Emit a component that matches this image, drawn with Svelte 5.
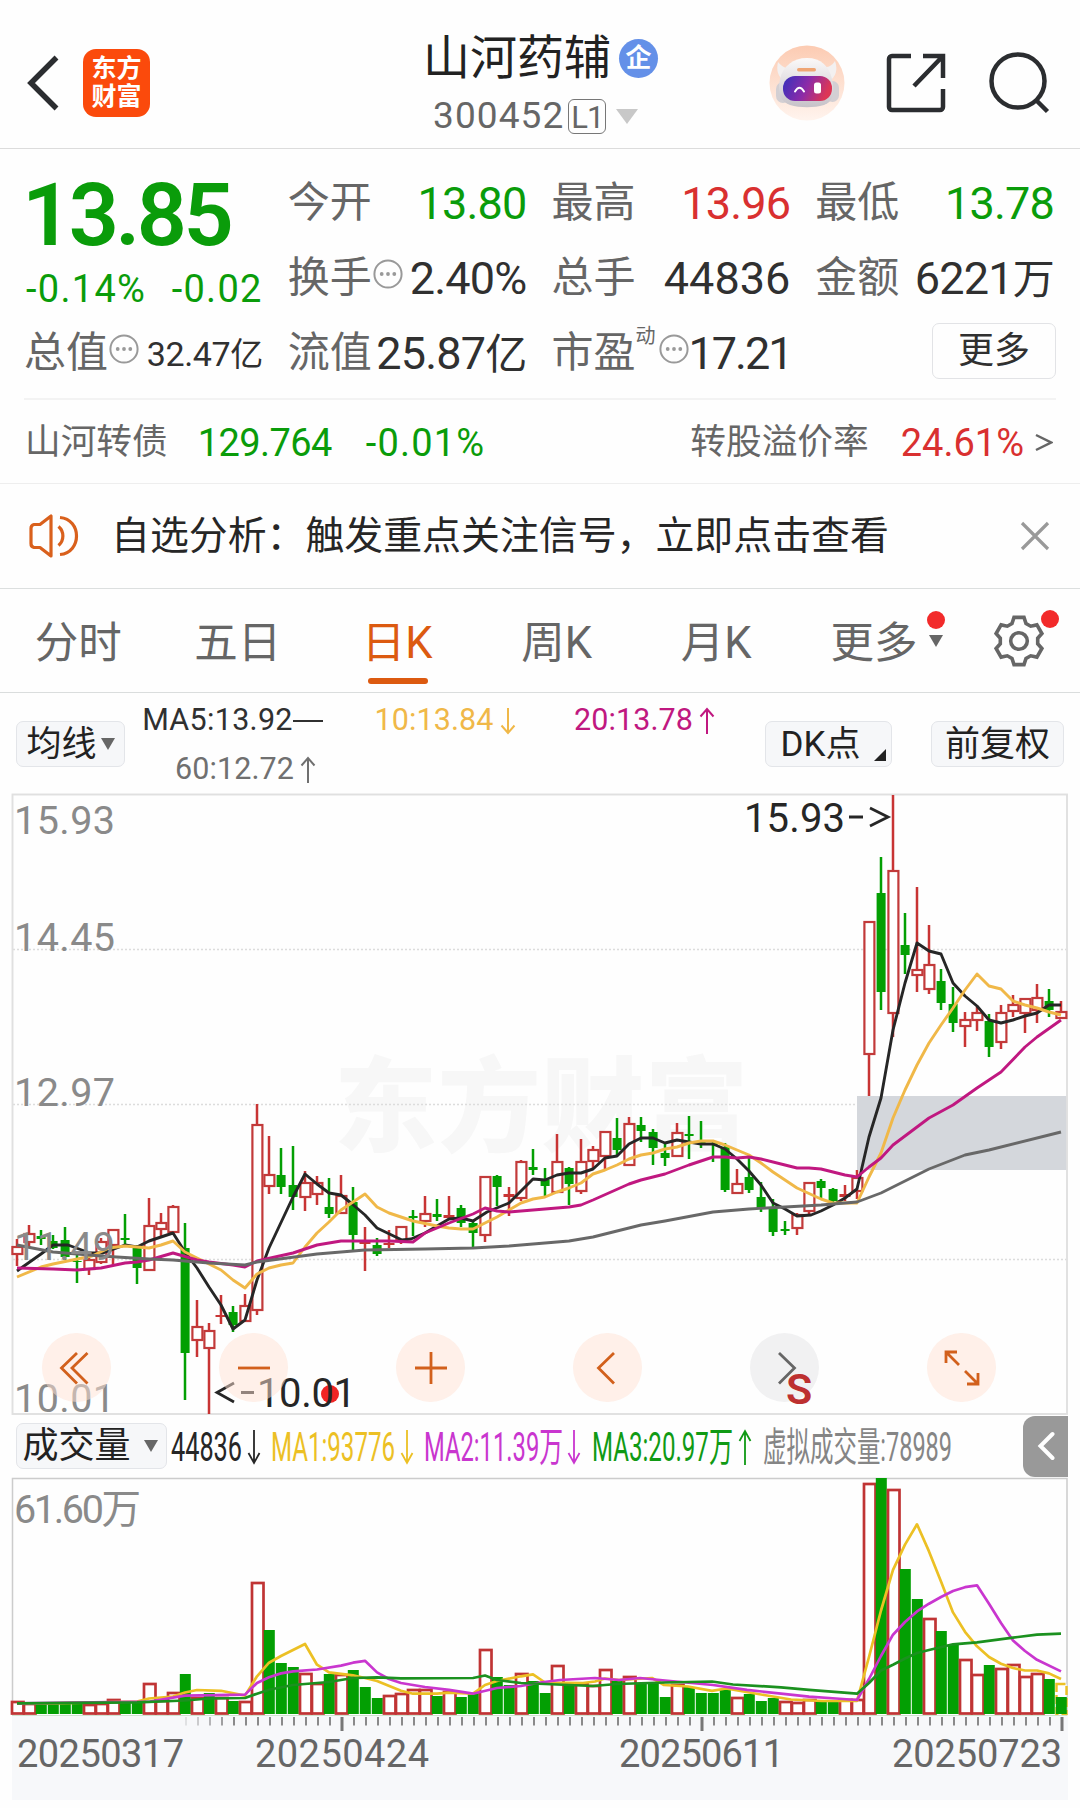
<script lang="ts">
  type Candle = [string, number, number, number, number];

  const tabs = ["分时", "五日", "日K", "周K", "月K"];
  let activeTab = "日K";
  let noticeOpen = true;

  // type (r = up, g = down), high, body top, body bottom, low
  const candles: Candle[] = [
    ["r", 1239, 1247, 1254, 1266], ["r", 1225, 1234, 1242, 1246], ["g", 1230, 1236, 1239, 1245], ["g", 1235, 1241, 1248, 1249],
    ["g", 1227, 1240, 1257, 1260], ["g", 1252, 1261, 1262, 1283], ["r", 1258, 1260, 1269, 1275], ["r", 1238, 1242, 1262, 1264],
    ["r", 1229, 1230, 1245, 1265], ["g", 1214, 1238, 1240, 1244], ["g", 1245, 1247, 1268, 1284], ["r", 1198, 1226, 1270, 1270],
    ["r", 1213, 1223, 1229, 1237], ["r", 1205, 1207, 1232, 1232], ["g", 1223, 1248, 1353, 1400], ["r", 1300, 1327, 1340, 1357],
    ["r", 1323, 1331, 1348, 1414], ["r", 1295, 1315, 1317, 1324], ["g", 1306, 1312, 1325, 1332], ["r", 1294, 1306, 1321, 1322],
    ["r", 1104, 1125, 1310, 1315], ["r", 1136, 1175, 1186, 1194], ["g", 1148, 1175, 1187, 1194], ["g", 1146, 1185, 1197, 1210],
    ["r", 1171, 1183, 1197, 1211], ["r", 1176, 1183, 1194, 1205], ["g", 1178, 1207, 1214, 1218], ["r", 1175, 1196, 1213, 1214],
    ["g", 1187, 1202, 1235, 1250], ["r", 1227, 1242, 1244, 1271], ["g", 1238, 1245, 1254, 1256], ["r", 1230, 1243, 1245, 1248],
    ["r", 1226, 1227, 1240, 1244], ["g", 1210, 1216, 1218, 1236], ["r", 1196, 1214, 1221, 1227], ["g", 1199, 1214, 1217, 1221],
    ["r", 1196, 1215, 1218, 1219], ["g", 1205, 1208, 1223, 1227], ["g", 1220, 1223, 1233, 1247], ["r", 1176, 1177, 1235, 1242],
    ["g", 1175, 1176, 1187, 1206], ["r", 1187, 1194, 1197, 1216], ["r", 1160, 1162, 1198, 1201], ["g", 1149, 1167, 1170, 1175],
    ["g", 1168, 1180, 1186, 1196], ["r", 1134, 1162, 1192, 1193], ["g", 1167, 1168, 1184, 1205], ["r", 1139, 1162, 1191, 1194],
    ["r", 1146, 1150, 1161, 1169], ["r", 1131, 1132, 1156, 1171], ["g", 1118, 1138, 1150, 1155], ["r", 1117, 1124, 1165, 1166],
    ["g", 1117, 1125, 1131, 1142], ["g", 1129, 1132, 1148, 1165], ["g", 1142, 1153, 1158, 1166], ["r", 1123, 1133, 1156, 1156],
    ["g", 1116, 1134, 1136, 1159], ["g", 1121, 1142, 1144, 1148], ["g", 1140, 1143, 1145, 1162], ["g", 1143, 1147, 1190, 1192],
    ["r", 1169, 1184, 1193, 1193], ["g", 1155, 1177, 1190, 1193], ["g", 1182, 1197, 1208, 1212], ["g", 1199, 1208, 1232, 1236],
    ["g", 1221, 1229, 1231, 1235], ["r", 1213, 1215, 1228, 1235], ["r", 1182, 1183, 1211, 1215], ["g", 1179, 1181, 1188, 1199],
    ["g", 1188, 1189, 1201, 1203], ["r", 1185, 1194, 1197, 1201], ["r", 1170, 1178, 1191, 1199], ["r", 921, 922, 1054, 1096],
    ["g", 857, 893, 992, 1010], ["r", 795, 871, 1013, 1037], ["g", 913, 945, 955, 974], ["r", 887, 970, 975, 992],
    ["r", 925, 965, 989, 994], ["g", 969, 981, 1003, 1010], ["g", 987, 1004, 1023, 1032], ["r", 1012, 1020, 1026, 1047],
    ["r", 1006, 1013, 1020, 1031], ["g", 1014, 1021, 1047, 1057], ["r", 1005, 1013, 1042, 1049], ["r", 995, 1005, 1011, 1017],
    ["r", 998, 999, 1013, 1033], ["r", 984, 998, 1010, 1023], ["g", 989, 1001, 1010, 1017], ["r", 1001, 1012, 1018, 1019],
  ];

  const priceLines = [
    { color: "#262626", points: "17,1271 41,1254 53,1245 68,1245 90,1253 103,1253 125,1245 137,1247 149,1241 173,1233 185,1252 197,1268 209,1287 221,1305 233,1329 245,1320 257,1280 269,1248 293,1197 305,1174 317,1184 329,1193 341,1195 351,1203 365,1215 377,1228 402,1240 411,1239 425,1233 449,1219 461,1218 473,1221 487,1212 509,1203 533,1179 545,1180 557,1175 569,1173 581,1173 593,1169 605,1158 617,1156 629,1144 641,1138 653,1138 665,1143 677,1140 689,1142 701,1144 713,1144 725,1149 737,1159 749,1171 761,1185 773,1203 785,1209 797,1216 811,1215 821,1211 833,1205 845,1198 857,1189 869,1137 881,1098 893,1030 905,983 917,943 929,951 941,954 953,983 965,996 977,1006 989,1020 1001,1023 1013,1020 1025,1016 1037,1013 1049,1005 1061,1005" },
    { color: "#f0b848", points: "17,1277 41,1267 53,1264 92,1256 109,1248 125,1246 149,1248 161,1245 173,1241 185,1252 197,1258 221,1270 233,1280 245,1288 257,1274 269,1268 281,1265 293,1263 305,1247 317,1233 329,1222 341,1210 353,1202 365,1194 377,1207 389,1213 401,1217 413,1221 437,1226 449,1228 461,1229 473,1229 485,1223 497,1217 509,1210 521,1203 533,1199 545,1197 557,1192 569,1188 581,1183 593,1174 605,1170 617,1165 629,1159 641,1155 653,1153 665,1149 677,1147 689,1143 701,1141 713,1141 725,1145 737,1150 749,1155 761,1163 773,1172 797,1188 821,1199 833,1203 857,1203 869,1177 881,1153 893,1118 905,1090 917,1065 929,1043 941,1025 953,1008 965,990 977,974 989,986 1001,989 1013,1001 1025,1005 1037,1008 1049,1012 1061,1015" },
    { color: "#c01880", points: "17,1268 53,1269 77,1270 101,1268 125,1263 137,1262 149,1260 173,1253 197,1260 209,1262 233,1265 245,1267 257,1261 293,1253 317,1245 341,1241 389,1241 413,1242 425,1233 449,1223 473,1214 485,1208 497,1211 509,1212 533,1210 545,1209 569,1207 581,1205 593,1200 629,1184 641,1180 665,1174 689,1165 713,1157 725,1157 737,1158 749,1157 761,1159 785,1165 797,1168 809,1168 821,1169 845,1175 857,1177 869,1167 881,1158 893,1145 905,1136 929,1118 953,1105 977,1088 989,1080 1001,1072 1025,1047 1037,1037 1061,1020" },
    { color: "#686868", points: "17,1245 53,1252 101,1256 149,1259 173,1260 209,1263 245,1265 257,1262 317,1254 365,1250 425,1249 473,1248 509,1246 533,1244 569,1241 593,1237 641,1225 665,1221 713,1212 749,1209 785,1207 821,1205 857,1202 881,1193 929,1169 965,1155 989,1150 1061,1132" },
  ];

  const volumes = [
    13, 11, 12, 12, 11, 12, 10, 11, 15, 12, 12, 31, 14, 22, 40, 17, 21, 17, 13, 13, 132, 84, 51, 47,
    41, 31, 40, 40, 44, 27, 16, 19, 21, 25, 25, 18, 23, 17, 21, 65, 37, 29, 41, 33, 21, 49, 31, 31,
    29, 45, 33, 38, 31, 32, 17, 30, 27, 21, 21, 25, 17, 20, 13, 16, 13, 12, 15, 12, 12, 15, 15, 231,
    236, 225, 145, 115, 96, 83, 70, 55, 40, 49, 46, 50, 38, 41, 35, 17,
  ];
  const downBars = [2, 3, 4, 5, 9, 10, 14, 16, 18, 21, 22, 23, 26, 28, 29, 30, 35, 37, 38, 40, 41, 43, 44, 46, 50, 52, 53, 54, 56, 57, 58, 59, 61, 62, 63, 67, 68, 72, 74, 75, 77, 78, 81, 86, 87];

  // x, height above the baseline
  const volumeLines = [
    { color: "#ecc024", points: [[17, 11.6], [53, 11.6], [137, 13.5], [149, 16.5], [173, 18.5], [185, 22.5], [197, 25], [221, 24.2], [245, 19.4], [257, 38.7], [269, 52.3], [281, 59], [305, 71], [317, 50.3], [329, 42.6], [353, 39.7], [365, 37], [377, 34], [401, 24.2], [413, 21.3], [437, 21.3], [449, 22.3], [473, 21.3], [485, 30], [497, 34], [521, 38.7], [533, 40.6], [545, 32.5], [583, 32], [595, 33.5], [605, 36.5], [619, 35], [652, 37], [664, 30], [688, 28.5], [712, 24.2], [726, 26.5], [764, 20], [791, 15.5], [822, 14], [857, 14], [869, 58], [881, 104.5], [893, 145.2], [905, 170.4], [917, 190.7], [929, 163.6], [941, 133.6], [953, 102.6], [965, 83.2], [977, 68.7], [989, 58], [1001, 51.3], [1013, 47], [1025, 44.5], [1037, 44.5], [1049, 41.6], [1061, 36]] },
    { color: "#c936cf", points: [[17, 11.6], [150, 13.5], [185, 19.4], [245, 20.4], [257, 32], [269, 37.7], [281, 41.6], [293, 43.6], [317, 45.5], [341, 49.4], [353, 52.3], [365, 54.2], [377, 42.6], [389, 36], [401, 32], [425, 28], [449, 25.2], [473, 21.3], [497, 27], [521, 29], [540, 32.5], [560, 35], [595, 37], [619, 35], [640, 37], [665, 34.5], [713, 30], [747, 25.2], [781, 21.3], [809, 18.4], [836, 16.5], [857, 15], [869, 36], [881, 59], [893, 80.3], [905, 93], [917, 103.6], [929, 111.3], [941, 118], [953, 124], [965, 127.8], [977, 129.7], [989, 111.3], [1001, 92], [1013, 74.5], [1025, 64], [1037, 55.2], [1061, 43.6]] },
    { color: "#1b911f", points: [[17, 11.6], [137, 12.6], [185, 14.5], [209, 16.5], [245, 17], [257, 21.3], [269, 25.2], [293, 30], [329, 33], [353, 37], [377, 37.7], [401, 36.7], [473, 37], [485, 39.5], [497, 35], [521, 32], [545, 31], [593, 29], [617, 31], [665, 32.5], [712, 33.5], [733, 30.5], [781, 27.7], [809, 25.2], [857, 21.3], [869, 32], [881, 44.5], [893, 50.3], [905, 56.5], [917, 62], [929, 65], [953, 70.7], [977, 72.6], [1013, 77.4], [1037, 80.3], [1061, 81.3]] },
  ];

  const base = 1715;
  const candleX = (i: number) => 17 + i * 12;
  const toPoints = (list: number[][]) => list.map(([x, h]) => `${x},${base - h}`).join(" ");

  const ticks = Array.from({ length: 74 }, (_, i) => i + 14);
  const dates = [
    { text: "20250317", x: 17, width: 167 },
    { text: "20250424", x: 255, width: 174 },
    { text: "20250611", x: 619, width: 165 },
    { text: "20250723", x: 892, width: 170 },
  ];

  const prices = [
    { text: "15.93", y: 834 },
    { text: "14.45", y: 951 },
    { text: "12.97", y: 1106 },
    { text: "11.49", y: 1260 },
    { text: "10.01", y: 1412 },
  ];

  const volumeLegend = [
    { text: "44836", x: 171, width: 71, color: "#262626", arrow: 254, up: false },
    { text: "MA1:93776", x: 271, width: 124, color: "#ecc024", arrow: 407, up: false },
    { text: "MA2:11.39万", x: 424, width: 139, color: "#c936cf", arrow: 574, up: false },
    { text: "MA3:20.97万", x: 592, width: 141, color: "#109a14", arrow: 745, up: true },
    { text: "虚拟成交量:78989", x: 763, width: 189, color: "#858585", arrow: 0, up: false },
  ];

  const gear = Array.from({ length: 6 }, (_, k) => (k * Math.PI) / 3)
    .flatMap((a) =>
      [[-7, -17.5], [-5, -23.6], [5, -23.6], [7, -17.5]].map(
        ([x, y]) => `${(x * Math.cos(a) - y * Math.sin(a)).toFixed(1)},${(x * Math.sin(a) + y * Math.cos(a)).toFixed(1)}`
      )
    )
    .join(" ");
</script>

{#snippet info()}
  <svg class="info" width="30" height="30" viewBox="0 0 30 30">
    <circle cx="15" cy="15" r="13.6" fill="none" stroke="#999" stroke-width="2" />
    <circle cx="8.7" cy="15" r="1.9" fill="#999" />
    <circle cx="15" cy="15" r="1.9" fill="#999" />
    <circle cx="21.3" cy="15" r="1.9" fill="#999" />
  </svg>
{/snippet}

{#snippet arrow(up: boolean)}
  <svg class="arrow" width="16" height="28" viewBox="0 0 16 28">
    <path d={up ? "M8 27V2M1.5 9.5L8 2l6.5 7.5" : "M8 1v25M1.5 18.5L8 26l6.5-7.5"} />
  </svg>
{/snippet}

<main>
  <header>
    <svg class="back" width="34" height="58" viewBox="0 0 34 58">
      <path d="M31.5 3.5L6 29l25.5 25.5" />
    </svg>
    <div class="logo"><span>东方</span><span>财富</span></div>
    <div class="stock">
      <div class="name">山河药辅<span class="company">企</span></div>
      <div class="code"><span>300452</span><span class="level">L1</span><i class="caret"></i></div>
    </div>
    <svg class="robot" width="76" height="76" viewBox="0 0 76 76">
      <defs>
        <linearGradient id="halo" x1="0" y1="0" x2="0" y2="1">
          <stop offset="0" stop-color="#fccbb2" />
          <stop offset="1" stop-color="#fff4ee" />
        </linearGradient>
        <linearGradient id="visor" x1="0" y1="0" x2="1" y2=".25">
          <stop offset="0" stop-color="#3431bd" />
          <stop offset=".55" stop-color="#8c2ba8" />
          <stop offset="1" stop-color="#dc3656" />
        </linearGradient>
        <linearGradient id="shell" x1="0" y1="0" x2="0" y2="1">
          <stop offset="0" stop-color="#fbf9f9" />
          <stop offset="1" stop-color="#c6c2c8" />
        </linearGradient>
      </defs>
      <circle cx="38" cy="38" r="37.5" fill="url(#halo)" />
      <path d="M9 17c-2 9 0 14 6 19l10-12c-7 0-12-2-16-7zM66 16c3 9 1 15-5 20l-10-13c7 0 12-2 15-7z" fill="#f3f0f0" />
      <rect x="7" y="37" width="14" height="21" rx="7" fill="#d3cfd3" />
      <rect x="57" y="36" width="13" height="21" rx="6.5" fill="#d3cfd3" />
      <path d="M38 13c14 0 22 8 25 21 3 14 1 23-8 26-10 3-24 3-34 0-9-3-13-12-10-26 3-13 13-21 27-21z" fill="url(#shell)" />
      <rect x="14" y="31" width="49" height="25" rx="12" fill="url(#visor)" />
      <path d="M26 46.5q4.500-7.500 9 0" fill="none" stroke="#fff" stroke-width="2" stroke-linecap="round" />
      <rect x="45" y="37.5" width="7" height="11" rx="2.5" fill="#fff" />
      <rect x="28" y="23" width="19" height="3.500" rx="1.700" fill="#efa574" />
    </svg>
    <svg class="share" width="60" height="60" viewBox="0 0 60 60">
      <path d="M25 3H6a3 3 0 0 0-3 3v48a3 3 0 0 0 3 3h48a3 3 0 0 0 3-3V36M37 3h20v22M56 4L28 33" />
    </svg>
    <svg class="search" width="62" height="62" viewBox="0 0 62 62">
      <circle cx="29" cy="29" r="26.5" />
      <path d="M47.5 48.5L58.5 59.5" />
    </svg>
  </header>

  <section class="quote">
    <div class="stats">
      <div class="price green">13.85</div>
      <div class="stat"><span>今开</span><b class="green">13.80</b></div>
      <div class="stat"><span>最高</span><b class="red">13.96</b></div>
      <div class="stat"><span>最低</span><b class="green">13.78</b></div>

      <div class="change green"><span>-0.14%</span><span>-0.02</span></div>
      <div class="stat"><span>换手{@render info()}</span><b>2.40%</b></div>
      <div class="stat"><span>总手</span><b class="hands">44836</b></div>
      <div class="stat"><span>金额</span><b>6221<i>万</i></b></div>

      <div class="stat small"><span>总值{@render info()}</span><b>32.47<i>亿</i></b></div>
      <div class="stat"><span>流值</span><b>25.87<i>亿</i></b></div>
      <div class="stat"><span>市盈<sup>动</sup>{@render info()}</span><b class="pe">17.21</b></div>
      <button class="more">更多</button>
    </div>
    <div class="bond">
      <span>山河转债</span>
      <b class="green bond-price">129.764</b>
      <b class="green bond-change">-0.01%</b>
      <span class="premium">转股溢价率</span>
      <b class="red">24.61%</b>
      <svg width="18" height="24" viewBox="0 0 18 24"><path d="M1 4l15 7.500L1 19" fill="none" stroke="#666" stroke-width="2.500" /></svg>
    </div>
  </section>

  {#if noticeOpen}
    <section class="notice">
      <svg width="52" height="46" viewBox="0 0 52 46" class="speaker">
        <path d="M3 15.500a4 4 0 0 1 3-4h6L23 3v40l-11-8.500H6a4 4 0 0 1-3-4zM30.500 13.500a12.500 12.500 0 0 1 0 19M32 4.500c22 2 22 35 0 37" />
      </svg>
      <p>自选分析：触发重点关注信号，立即点击查看</p>
      <button class="close" aria-label="关闭" on:click={() => (noticeOpen = false)}>
        <svg width="30" height="30" viewBox="0 0 30 30"><path d="M2 2l26 26M28 2L2 28" stroke="#999" stroke-width="3.2" /></svg>
      </button>
    </section>
  {/if}

  <nav>
    {#each tabs as tab}
      <button class="tab" class:active={tab === activeTab} on:click={() => (activeTab = tab)}>{tab}</button>
    {/each}
    <button class="tab tab-more">更多<span class="marks"><i class="dot"></i><i class="down"></i></span></button>
    <button class="settings" aria-label="设置">
      <svg width="54" height="54" viewBox="-27 -27 54 54" fill="none" stroke="#666" stroke-width="3.600">
        <polygon points={gear} />
        <circle r="8.300" />
      </svg>
      <i class="dot"></i>
    </button>
  </nav>

  <section class="toolbar">
    <button class="chip average">均线<i class="down"></i></button>
    <div class="averages">
      <span>MA5:13.92<i class="flat"></i></span>
      <span class="ma10">10:13.84{@render arrow(false)}</span>
      <span class="ma20">20:13.78{@render arrow(true)}</span>
      <span class="ma60">60:12.72{@render arrow(true)}</span>
    </div>
    <button class="chip dk">DK点<i class="corner"></i></button>
    <button class="chip adjust">前复权</button>
  </section>

  <section class="kline">
    <svg width="1080" height="624" viewBox="0 793 1080 624">
      <text class="watermark" x="334" y="1144" textLength="414">东方财富</text>
      {#each [949.5, 1104.5, 1259.5] as y}
        <line x1="13" x2="1067" y1={y} y2={y} stroke="#dcdcdc" stroke-width="1.500" stroke-dasharray="2 2" />
      {/each}
      <rect x="857" y="1096" width="210" height="74" fill="#d4d7dc" />
      <rect x="12.5" y="794.5" width="1054.5" height="619.5" fill="none" stroke="#e0e0e0" stroke-width="1.900" />

      {#each candles as [type, high, top, bottom, low], i}
        {#if type === "r"}
          <path d={`M${candleX(i)} ${high}V${top}M${candleX(i)} ${bottom}V${low}`} stroke="#c83434" stroke-width="2.5" />
          {#if bottom - top < 4}
            <rect x={candleX(i) - 5.5} y={top} width="11" height={bottom - top} fill="#c83434" />
          {:else}
            <rect x={candleX(i) - 4.6} y={top} width="10" height={bottom - top} fill="#fff" stroke="#c23a3a" stroke-width="2.200" />
          {/if}
        {:else}
          <line x1={candleX(i)} x2={candleX(i)} y1={high} y2={low} stroke="#039f03" stroke-width="2.5" />
          <rect x={candleX(i) - 4.4} y={top} width="9" height={bottom - top} fill="#039f03" />
        {/if}
      {/each}

      {#each priceLines as line}
        <polyline points={line.points} fill="none" stroke={line.color} stroke-width="2.900" stroke-linejoin="round" />
      {/each}

      {#each prices as price}
        <text class="axis" x="14" y={price.y} textLength="101">{price.text}</text>
      {/each}
      <text class="peak" x="744" y="832" textLength="101">15.93</text>
      <path class="pointer" d="M849 817h14M870 808l18 9-18 9" />
      <circle cx="330" cy="1394" r="9" fill="#f02424" />
      <path class="pointer" d="M234 1383l-17 9.500 17 9.500M241 1392.500h13" />
      <text class="peak" x="257" y="1407" textLength="99">10.01</text>
    </svg>
    <div class="controls">
      <button aria-label="最早"><svg viewBox="-16 -16 32 32"><path d="M0-15L-15.500 0 0 15.500M10.500-15L-5 0l15.500 15.500" /></svg></button>
      <button aria-label="缩小"><svg viewBox="-16 -16 32 32"><path d="M-16 0h32" /></svg></button>
      <button aria-label="放大"><svg viewBox="-16 -16 32 32"><path d="M-16 0h32M0-16v32" /></svg></button>
      <button aria-label="后退"><svg viewBox="-16 -16 32 32"><path d="M6-15L-9.500 0 6 15.500" /></svg></button>
      <button class="disabled" aria-label="前进"><svg viewBox="-16 -16 32 32"><path d="M-6-15L9.500 0-6 15.500" /></svg><span class="sell">S</span></button>
      <button aria-label="全屏"><svg viewBox="-16 -16 32 32"><path d="M-16-5v-11h11M-15-15l12 12M16 5v11H5M15 15L3 3" /></svg></button>
    </div>
  </section>

  <section class="volume-bar">
    <button class="chip volume-chip">成交量<i class="down"></i></button>
    <svg width="856" height="60" viewBox="167 1417 856 60">
      {#each volumeLegend as item}
        <text x={item.x} y="1461" fill={item.color} textLength={item.width} lengthAdjust="spacingAndGlyphs">{item.text}</text>
        {#if item.arrow}
          <path
            d={item.up
              ? `M${item.arrow} 1465V1431M${item.arrow - 5.5} 1441L${item.arrow} 1431L${item.arrow + 5.5} 1441`
              : `M${item.arrow} 1430V1463M${item.arrow - 5.5} 1453L${item.arrow} 1463L${item.arrow + 5.5} 1453`}
            fill="none"
            stroke={item.color}
            stroke-width="1.800"
          />
        {/if}
      {/each}
    </svg>
    <button class="drawer" aria-label="展开">
      <svg width="18" height="30" viewBox="0 0 18 30"><path d="M15.500 3L3.500 15l12 12" fill="none" stroke="#fff" stroke-width="4" stroke-linecap="round" /></svg>
    </button>
  </section>

  <section class="volume">
    <svg width="1080" height="324" viewBox="0 1477 1080 324">
      <rect x="12" y="1716" width="1056" height="84" fill="#f7f8fa" />
      <path d="M12.500 1715V1478.500H1067V1715" fill="none" stroke="#ccc" stroke-width="1.500" />
      <text class="axis" x="14" y="1523" textLength="127">61.60万</text>
      {#each volumes as height, i}
        {#if i === 87}
          <rect x={candleX(i) - 4.5} y={base - 31} width="10" height="30" fill="#fff" stroke="#ecc024" stroke-width="2.400" stroke-dasharray="9 3" />
        {/if}
        {#if downBars.includes(i)}
          <rect x={candleX(i) - 5.2} y={base - height - 1} width="11" height={height} fill="#039f03" />
        {:else}
          <rect x={candleX(i) - 5} y={base - height} width="11.5" height={height - 1.5} fill="#fff" stroke="#c03434" stroke-width="2.700" />
        {/if}
      {/each}
      <line x1="12" x2="1067" y1="1715.5" y2="1715.5" stroke="#cfe3cf" stroke-width="1" />
      {#each volumeLines as line}
        <polyline points={toPoints(line.points)} fill="none" stroke={line.color} stroke-width="2.700" stroke-linejoin="round" />
      {/each}
      {#each ticks as i}
        {@const major = i % 30 === 27}
        <line x1={i * 12 + 18} x2={i * 12 + 18} y1="1717" y2={major ? 1731 : 1725.5} stroke="#777" stroke-width={major ? 3 : 1.7} opacity={Math.min(1, (i - 13) * 0.2)} />
      {/each}
      {#each dates as date}
        <text class="date" x={date.x} y="1766.500" textLength={date.width}>{date.text}</text>
      {/each}
    </svg>
  </section>
</main>

<style>
  :global(body) {
    background: #fdfdfd;
  }

  main {
    width: 1080px;
    height: 1808px;
    overflow: hidden;
    background: #fefefe;
    color: #303030;
    font-family: Roboto, "Noto Sans CJK SC", sans-serif;
    line-height: 1.2;
  }

  button {
    padding: 0;
    border: none;
    background: none;
    color: inherit;
    font: inherit;
  }

  b {
    font-weight: 400;
  }

  svg {
    display: block;
    flex: none;
  }

  .green {
    color: #0a9c0a;
  }

  .red {
    color: #d93030;
  }

  header {
    display: flex;
    align-items: center;
    height: 149px;
    padding-top: 18px;
    box-sizing: border-box;
    border-bottom: 1.5px solid #dcdcdc;
  }

  .back {
    margin-left: 25px;
    fill: none;
    stroke: #2b2d30;
    stroke-width: 5.5;
  }

  .logo {
    display: flex;
    flex-direction: column;
    justify-content: center;
    align-items: center;
    width: 67px;
    height: 68px;
    margin-left: 24px;
    border-radius: 13px;
    background: #fb4a0c;
    color: #fff;
    font-size: 25px;
    font-weight: 700;
    line-height: 28px;
  }

  .stock {
    width: 250px;
    height: 120px;
    margin-left: 273px;
  }

  .name {
    display: flex;
    align-items: center;
    height: 62px;
    margin-top: 4px;
    font-size: 47px;
    line-height: 62px;
    white-space: nowrap;
    color: #222;
  }

  .company {
    width: 39px;
    height: 39px;
    margin-left: 8px;
    border-radius: 50%;
    background: #6490e8;
    color: #fff;
    font-size: 26px;
    font-weight: 700;
    line-height: 38px;
    text-align: center;
  }

  .code {
    display: flex;
    align-items: center;
    height: 50px;
    margin-top: 2px;
    padding-left: 10px;
    font-size: 37px;
    letter-spacing: 1.1px;
    color: #666;
  }

  .level {
    width: 36px;
    height: 33px;
    margin-left: 4px;
    border: 1.5px solid #777;
    border-radius: 6px;
    font-size: 31px;
    line-height: 35px;
    letter-spacing: -1px;
    text-align: center;
  }

  .caret {
    margin-left: 10px;
    border: 11.5px solid transparent;
    border-top: 15px solid #c8c8c8;
    border-bottom: 0;
  }

  .robot {
    margin-left: 96px;
  }

  .share {
    margin-left: 41px;
    fill: none;
    stroke: #2b2d30;
    stroke-width: 4.5;
  }

  .search {
    margin-left: 43px;
    fill: none;
    stroke: #2b2d30;
    stroke-width: 4.5;
  }

  .quote {
    height: 335px;
    box-sizing: border-box;
    padding: 16px 24px 0;
    border-bottom: 1.5px solid #eee;
  }

  .stats {
    display: grid;
    grid-template-columns: repeat(4, 236.75px);
    grid-template-rows: 75px 75px 75px;
    column-gap: 27px;
    height: 235px;
    box-sizing: border-box;
    padding: 0 2px;
    border-bottom: 2px solid #f3f3f3;
  }

  .price {
    align-self: start;
    margin: 2px 0 0 -4px;
    font-size: 88px;
    font-weight: 600;
    line-height: 96px;
    letter-spacing: -3.6px;
  }

  .change {
    display: flex;
    justify-content: space-between;
    margin-top: 9px;
    font-size: 38px;
    line-height: 80px;
    letter-spacing: 1.3px;
  }

  .stat {
    display: flex;
    justify-content: space-between;
    align-items: center;
    white-space: nowrap;
  }

  .stat > span {
    display: flex;
    align-items: center;
    margin-left: -2px;
    font-size: 42px;
    line-height: 50px;
    color: #666;
  }

  .stat b {
    padding-top: 2px;
    font-size: 45px;
    line-height: 52px;
    letter-spacing: -0.8px;
  }

  .stat b i {
    font-size: 42px;
    font-style: normal;
    line-height: 1;
  }

  .stat .hands {
    letter-spacing: 0;
  }

  .stat .pe {
    margin-right: 1px;
    letter-spacing: -2px;
  }

  .stat.small b {
    font-size: 34px;
    letter-spacing: -0.4px;
  }

  .stat.small b i {
    font-size: 33px;
  }

  .info {
    margin: -8px 0 0 1px;
  }

  sup {
    align-self: flex-start;
    margin: -4px 2px 0 0;
    font-size: 20px;
    line-height: 24px;
  }

  .more {
    justify-self: end;
    align-self: center;
    width: 124px;
    height: 56px;
    margin: -4px -2px 0 0;
    border: 1.5px solid #e2e3e6;
    border-radius: 7px;
    font-size: 36px;
    line-height: 52px;
  }

  .bond {
    display: flex;
    align-items: center;
    height: 83px;
    padding: 0 3px 0 1px;
    font-size: 35.7px;
    line-height: 44px;
    color: #666;
  }

  .bond b {
    padding-top: 2px;
    font-size: 38px;
  }

  .bond-price {
    margin-left: 30px;
  }

  .bond .bond-price {
    letter-spacing: -0.6px;
  }

  .bond .bond-change {
    margin-left: 34px;
    letter-spacing: 1.2px;
  }

  .premium {
    margin: 0 32px 0 auto;
  }

  .bond svg {
    margin: 2px 0 0 11px;
  }

  .notice {
    display: flex;
    align-items: center;
    height: 105px;
    box-sizing: border-box;
    padding: 0 30px 0 28px;
    border-bottom: 1.5px solid #dcdfdf;
  }

  .speaker {
    fill: none;
    stroke: #d9601c;
    stroke-width: 3.2;
    stroke-linejoin: round;
  }

  .notice p {
    margin: 0 auto 0 31px;
    font-size: 38.9px;
    line-height: 46px;
    color: #262626;
  }

  nav {
    display: flex;
    align-items: center;
    height: 104px;
    box-sizing: border-box;
    border-bottom: 1.5px solid #dadddd;
  }

  .tab {
    display: flex;
    justify-content: center;
    position: relative;
    width: 159.5px;
    height: 100px;
    padding-right: 3px;
    box-sizing: border-box;
    font-size: 43.5px;
    line-height: 106px;
    color: #666;
  }

  .tab.active {
    color: #dc5a10;
  }

  .tab.active::after {
    content: "";
    position: absolute;
    bottom: 7px;
    left: 50%;
    width: 60px;
    height: 6px;
    margin-left: -31px;
    border-radius: 3px;
    background: #dc5a10;
  }

  .tab-more {
    width: 180px;
    padding-right: 0;
  }

  .marks {
    display: flex;
    flex-direction: column;
    align-items: center;
    gap: 6px;
    margin: 20px 0 0 9px;
  }

  .dot {
    width: 18px;
    height: 18px;
    border-radius: 50%;
    background: #f22a2a;
  }

  .down {
    width: 0;
    border: 7.5px solid transparent;
    border-top: 12px solid #666;
    border-bottom: 0;
  }

  .settings {
    position: relative;
    margin-left: 14px;
  }

  .settings .dot {
    position: absolute;
    top: -4px;
    right: -13px;
  }

  .toolbar {
    display: flex;
    height: 100px;
    padding-left: 16px;
  }

  .chip {
    display: flex;
    align-items: center;
    justify-content: center;
    height: 46px;
    box-sizing: border-box;
    border: 1.5px solid #e3e5e9;
    border-radius: 7px;
    background: #f6f7f9;
    font-size: 35px;
    line-height: 45px;
    color: #222;
  }

  .toolbar .chip {
    margin-top: 28px;
  }

  .average {
    width: 109px;
    gap: 4px;
  }

  .averages {
    display: grid;
    grid-template-columns: 220px 200px 211px;
    grid-template-rows: 49px 49px;
    width: 631px;
    margin-top: 3px;
    font-size: 30.5px;
    letter-spacing: 0.1px;
    color: #303030;
  }

  .averages span {
    display: flex;
    align-items: center;
    justify-content: center;
  }

  .averages span:first-child {
    margin-left: -5px;
    letter-spacing: 0.3px;
  }

  .flat {
    width: 30px;
    height: 2px;
    background: #303030;
  }

  .arrow {
    margin-left: 6px;
    fill: none;
    stroke: currentColor;
    stroke-width: 2;
  }

  .averages .ma10 {
    color: #f0b848;
  }

  .averages .ma20 {
    padding-right: 12px;
    color: #c01880;
  }

  .averages .ma60 {
    padding-left: 21px;
    color: #707070;
  }

  .dk {
    position: relative;
    width: 127px;
    margin-left: 9px;
    padding-right: 16px;
  }

  .corner {
    position: absolute;
    right: 5px;
    bottom: 5px;
    border-left: 12px solid transparent;
    border-bottom: 12px solid #222;
  }

  .adjust {
    width: 133px;
    margin-left: 39px;
  }

  .kline {
    position: relative;
    height: 624px;
  }

  .watermark {
    font-size: 103px;
    font-weight: 900;
    fill: #f7f7f7;
  }

  .axis {
    font-size: 39.5px;
    fill: #8a8a8a;
  }

  .peak {
    font-size: 40px;
    fill: #262626;
  }

  .pointer {
    fill: none;
    stroke: #262626;
    stroke-width: 2.8;
  }

  .controls {
    position: absolute;
    left: 42px;
    bottom: 15px;
    display: flex;
    gap: 108px;
  }

  .controls button {
    position: relative;
    display: flex;
    align-items: center;
    justify-content: center;
    width: 69px;
    height: 69px;
    border-radius: 50%;
    background: rgba(255, 226, 211, 0.5);
  }

  .controls svg {
    width: 32px;
    height: 32px;
    overflow: visible;
    fill: none;
    stroke: #d2601c;
    stroke-width: 2.8;
  }

  .controls .disabled {
    background: #f1f1f2;
  }

  .controls .disabled svg {
    stroke: #666;
  }

  .sell {
    position: absolute;
    left: 36px;
    top: 32px;
    font-size: 43px;
    font-weight: 600;
    line-height: 48px;
    color: #bd3030;
  }

  .volume-bar {
    display: flex;
    align-items: center;
    height: 60px;
    padding-left: 16px;
  }

  .volume-chip {
    width: 151px;
    gap: 13px;
    margin-top: -2px;
    padding-right: 3px;
    font-size: 36px;
  }

  .volume-bar text {
    font-size: 40px;
  }

  .drawer {
    display: flex;
    align-items: center;
    justify-content: center;
    width: 45px;
    height: 61px;
    margin-top: -2px;
    border-radius: 12px 0 0 12px;
    background: #999;
  }

  .date {
    font-size: 38px;
    fill: #666;
  }
</style>
